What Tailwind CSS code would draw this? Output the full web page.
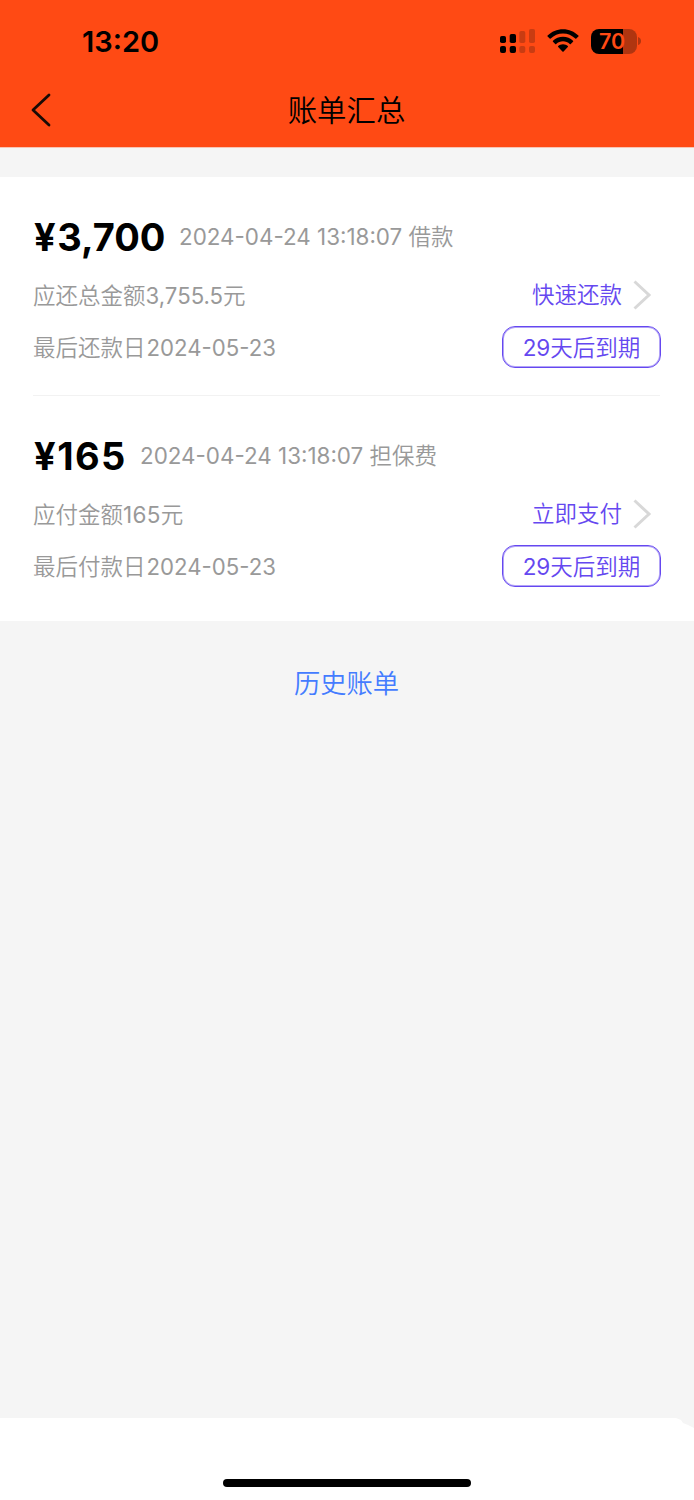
<!DOCTYPE html>
<html lang="zh-CN">
<head>
<meta charset="utf-8">
<title>账单汇总</title>
<script src="https://cdn.jsdelivr.net/npm/@tailwindcss/browser@4"></script>
</head>
<body class="bg-[#f5f5f5] font-['Inter','Noto_Sans_CJK_SC',sans-serif] text-black whitespace-nowrap">
<div class="w-[694px] h-[1500px] flex flex-col overflow-hidden">
  <header class="h-[148px] bg-[#ff4a14] border-b border-[#f9c4b4] shrink-0">
    <div class="h-[82px] pl-[82px] pr-[53px] flex items-center justify-between">
      <div class="text-[29px] leading-[40px] pt-[2px] font-semibold">13:20</div>
      <div class="flex items-center">
        <svg class="w-[36px] h-[26px]" viewBox="0 0 36 26">
          <rect x="0" y="8" width="6" height="7" rx="1.8"/><rect x="9.7" y="6" width="6.3" height="9" rx="1.8"/>
          <rect x="0" y="18" width="6" height="7" rx="2"/><rect x="9.7" y="18" width="6.3" height="7" rx="2"/>
          <g fill="#c93c12"><rect x="19.3" y="3" width="6" height="12" rx="1.8"/><rect x="29" y="1" width="6" height="14" rx="1.8"/><rect x="19.3" y="18" width="6" height="7" rx="2"/><rect x="29" y="18" width="6" height="7" rx="2"/></g>
        </svg>
        <svg class="ml-[11px] w-[32px] h-[26px]" viewBox="0 0 32 26">
          <path d="M16 1.2C22 1.2 27.4 3.6 31.4 7.5Q31.9 8 31.4 8.5L29.3 10.6Q28.8 11 28.3 10.6C25 7.3 20.7 5.5 16 5.5S7 7.3 3.7 10.6Q3.2 11 2.7 10.6L.6 8.5Q.1 8 .6 7.5C4.6 3.6 10 1.2 16 1.2Z"/>
          <path d="M16 8.8C19.9 8.8 23.4 10.3 26 12.8Q26.5 13.3 26 13.8L23.8 16Q23.3 16.4 22.8 16C21 14.2 18.6 13.2 16 13.2S11 14.2 9.2 16Q8.7 16.4 8.2 16L6 13.8Q5.5 13.3 6 12.8C8.6 10.3 12.1 8.8 16 8.8Z"/>
          <path d="M16 16.3C18 16.3 19.5 17 20.8 18.1Q21.3 18.6 20.8 19.1L16.6 23.4Q16 23.9 15.4 23.4L11.2 19.1Q10.7 18.6 11.2 18.1C12.5 17 14 16.3 16 16.3Z"/>
        </svg>
        <div class="ml-[12px] w-[46px] h-[25px] rounded-[8px] overflow-hidden bg-linear-to-r from-black from-70% to-[#b03510] to-70% text-[#ff4a14] text-[21.5px] leading-[25px] font-semibold pl-[8px]">70</div>
        <svg class="ml-[1px] w-[3px] h-[8px]" viewBox="0 0 3 8"><path d="M0 0Q3 1 3 4T0 8Z" fill="#b03510"/></svg>
      </div>
    </div>
    <div class="h-[56px] grid grid-cols-[1fr_auto_1fr] items-center">
      <svg class="ml-[30px] w-[22px] h-[36px]" viewBox="0 0 22 36" fill="none" stroke="#190b05" stroke-width="2.8" stroke-linecap="round" stroke-linejoin="round"><path d="M19 3L3 18 19 33"/></svg>
      <h1 class="text-[29.4px] leading-[44px] pt-[2px] pr-[1px] font-[350]">账单汇总</h1>
      <span></span>
    </div>
  </header>

  <main class="mt-[29px] h-[444px] pl-[33px] pr-[34px] bg-white shrink-0 text-[22.5px] font-[350] text-[#999]">
    <section class="h-[219px] pt-[34px] border-b border-[#f2f2f2]">
      <div class="h-[52px] flex items-center"><strong class="w-[131px] pl-px text-[38px] leading-[52px] text-black font-bold"><span class="mr-[1.5px]">¥</span>3,700</strong><span class="ml-[15px]"><span class="font-normal text-[22.4px]">2024-04-24 13:18:07 </span>借款</span></div>
      <div class="mt-[6px] h-[52px] flex items-center justify-between"><span class="pt-px">应还总金额<span class="font-normal text-[22.2px]">3,755.5</span>元</span>
        <a class="flex items-center text-[#6548f0] pr-[8px]"><span>快速还款</span><svg class="ml-[10px] w-[20px] h-[30px]" viewBox="0 0 20 30" fill="none" stroke="#d8d8d8" stroke-width="3"><path d="M2.5 1.5L17 15 2.5 28.5"/></svg></a></div>
      <div class="h-[52px] flex items-center justify-between"><span class="pt-px">最后还款日<span class="font-normal text-[22.2px] ml-px">2024-05-23</span></span>
        <span class="w-[159px] h-[42px] -mr-px leading-[41px] rounded-[13px] border border-[#6548f0] shadow-[inset_0_0_0_1px_#6548f080] text-[#6548f0] text-center"><span class="font-normal">29</span>天后到期</span></div>
    </section>
    <section class="h-[225px] pt-[34px]">
      <div class="h-[52px] flex items-center"><strong class="w-[94px] pl-px text-[38px] leading-[52px] text-black font-bold tracking-[1.4px]"><span class="mr-[1.5px] tracking-normal">¥</span>165</strong><span class="ml-[13px]"><span class="font-normal text-[22.4px]">2024-04-24 13:18:07 </span>担保费</span></div>
      <div class="mt-[6px] h-[52px] flex items-center justify-between"><span class="pt-px">应付金额<span class="font-normal tracking-[0.3px]">165</span>元</span>
        <a class="flex items-center text-[#6548f0] pr-[8px]"><span>立即支付</span><svg class="ml-[10px] w-[20px] h-[30px]" viewBox="0 0 20 30" fill="none" stroke="#d8d8d8" stroke-width="3"><path d="M2.5 1.5L17 15 2.5 28.5"/></svg></a></div>
      <div class="h-[52px] flex items-center justify-between"><span class="pt-px">最后付款日<span class="font-normal text-[22.2px] ml-px">2024-05-23</span></span>
        <span class="w-[159px] h-[42px] -mr-px leading-[41px] rounded-[13px] border border-[#6548f0] shadow-[inset_0_0_0_1px_#6548f080] text-[#6548f0] text-center"><span class="font-normal">29</span>天后到期</span></div>
    </section>
  </main>
  <a class="mt-[43px] pr-[1px] text-center text-[26.3px] leading-[40px] font-[350] text-[#447cff]">历史账单</a>
  <footer class="mt-auto h-[82px] bg-white flex items-end justify-center pb-[13px] [clip-path:polygon(0_0,676px_0,681px_2px,683px_5px,688px_7px,694px_10px,694px_82px,0_82px)]"><div class="w-[248px] h-[8px] rounded-full bg-black"></div></footer>
</div>
</body>
</html>
